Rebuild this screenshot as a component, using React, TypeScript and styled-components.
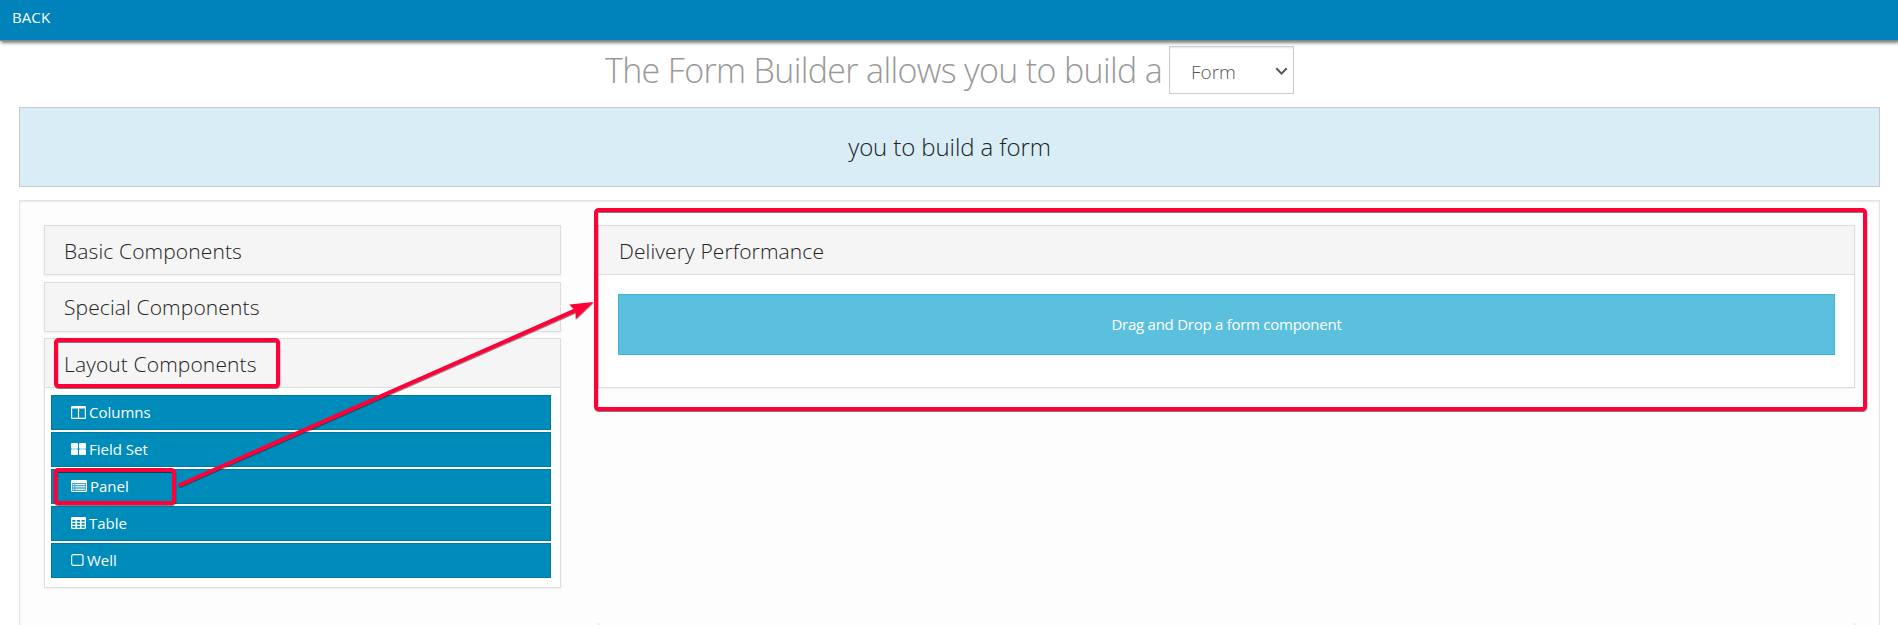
import React from "react";
import styled, { createGlobalStyle, css } from "styled-components";

const GlobalStyle = createGlobalStyle`
  *, *::before, *::after { box-sizing: border-box; }
  html, body { height: 625px; overflow: hidden; }
  body {
    margin: 0;
    background: #fff;
    color: #333;
    font-family: "Open Sans", "Noto Sans", sans-serif;
    font-size: 15px;
    line-height: 1.4;
  }
`;

const NavBar = styled.nav`
  height: 41px;
  padding: 7px 12px 0;
  background: #0083bb;
  border-bottom: 1px solid #8c8680;
  box-shadow: 1px 2px 3px rgba(0, 0, 0, 0.5);
  color: #fff;
  font-size: 15px;
  letter-spacing: 0.1px;
  line-height: 20px;
`;

const Page = styled.main`
  height: 584px;
  padding: 5px 18px 0 19px;
  overflow: hidden;
`;

const Heading = styled.h1`
  display: flex;
  justify-content: center;
  align-items: flex-start;
  height: 61px;
  margin: 0;
  color: #999;
  font-size: 34px;
  font-weight: 300;
  line-height: 48px;
  white-space: pre;
`;

const HeadingText = styled.span`
  width: 565px;
  margin-right: -1px;
  letter-spacing: -0.66px;
`;

const TypeSelect = styled.div`
  display: flex;
  align-items: center;
  justify-content: space-between;
  width: 125px;
  height: 48px;
  padding: 3px 5px 0 21px;
  border: 1px solid #ccc;
  box-shadow: inset 0 1px 2px rgba(0, 0, 0, 0.1);
  color: #555;
  font-size: 19px;
`;

const Banner = styled.section`
  display: flex;
  align-items: center;
  justify-content: center;
  height: 80px;
  background: #d9edf7;
  border: 1px solid #c8c8ca;
  color: #222;
  font-size: 24px;
  font-weight: 300;
  letter-spacing: -0.1px;
`;

const Well = styled.section`
  display: flex;
  align-items: flex-start;
  height: 425px;
  margin-top: 13px;
  padding: 24px 24px 0;
  gap: 37px;
  background: #fdfdfd;
  border: 1px solid #e3e3e3;
  border-bottom: 0;
  box-shadow: inset 0 1px 2px rgba(0, 0, 0, 0.07);
`;

const Sidebar = styled.aside`
  display: flex;
  flex-direction: column;
  width: 517px;
  gap: 7px;
`;

const Panel = styled.section<{ $raised?: boolean }>`
  background: #fff;
  border: 1px solid #ddd;
  box-shadow: 0 1px 2px rgba(0, 0, 0, 0.06);
  ${(p) => p.$raised && css`margin-top: -1px;`}
`;

const PanelTitle = styled.h3<{ $divided?: boolean; $line?: number; $indent?: number }>`
  height: ${(p) => (p.$divided ? 49 : 48)}px;
  margin: 0;
  padding: 0 ${(p) => p.$indent ?? 19}px;
  background: #f5f5f5;
  border-bottom: ${(p) => (p.$divided ? "1px solid #ddd" : "0")};
  color: #222;
  font-size: 21px;
  font-weight: 300;
  letter-spacing: 0.12px;
  line-height: ${(p) => p.$line ?? 50}px;
`;

const ComponentList = styled.div`
  display: flex;
  flex-direction: column;
  gap: 2px;
  height: 199px;
  padding: 7px 9px 0 6px;
`;

const ComponentButton = styled.button`
  display: flex;
  align-items: center;
  flex: 0 0 35px;
  padding: 0 19px 1px;
  gap: 3px;
  background: #008cba;
  border: 1px solid #0079a1;
  color: #fff;
  font: 400 15px "Open Sans", "Noto Sans", sans-serif;
`;

const Canvas = styled.div`
  display: flex;
  flex-direction: column;
  width: 1257px;
  gap: 235px;
`;

const CanvasBody = styled.div`
  height: 112px;
  padding: 19px 19px 0;
`;

const NextPanel = styled.div`
  height: 2px;
  border: 1px solid #ddd;
  border-width: 0 1px;
`;

const DropZone = styled.div`
  display: flex;
  align-items: center;
  justify-content: center;
  height: 61px;
  background: #5bc0de;
  border: 1px solid #3db5d8;
  color: #fff;
  font-size: 15px;
  letter-spacing: -0.26px;
`;

const Annotations = styled.svg`
  position: absolute;
  inset: 0 auto auto 0;
  pointer-events: none;
`;

type IconName = "columns" | "fieldset" | "panel" | "table" | "well";

const glyphs: Record<IconName, { width: number; shape: React.ReactNode }> = {
  columns: {
    width: 15,
    shape: (
      <path fillRule="evenodd" d="M1.3 0H13.7Q15 0 15 1.3V11.7Q15 13 13.7 13H1.3Q0 13 0 11.7V1.3Q0 0 1.3 0ZM1.2 2.4V11.8H6.9V2.4ZM8.1 2.4V11.8H13.8V2.4Z" />
    ),
  },
  fieldset: {
    width: 15,
    shape: (
      <>
        <rect width="7" height="5.7" rx="1" />
        <rect x="8" width="7" height="5.7" rx="1" />
        <rect y="6.3" width="7" height="5.7" rx="1" />
        <rect x="8" y="6.3" width="7" height="5.7" rx="1" />
      </>
    ),
  },
  panel: {
    width: 16,
    shape: (
      <>
        <path fillRule="evenodd" d="M1.3 0H14.7Q16 0 16 1.3V10.7Q16 12 14.7 12H1.3Q0 12 0 10.7V1.3Q0 0 1.3 0ZM1.1 3V10.9H14.9V3Z" />
        <path d="M2 4H3.3V5H2ZM4.3 4H14V5H4.3ZM2 6.3H3.3V7.3H2ZM4.3 6.3H14V7.3H4.3ZM2 8.7H3.3V9.7H2ZM4.3 8.7H14V9.7H4.3Z" />
        <path opacity=".25" d="M1 3H15V11H1Z" />
      </>
    ),
  },
  table: {
    width: 15,
    shape: (
      <path fillRule="evenodd" d="M1.3 0H13.7Q15 0 15 1.3V10.7Q15 12 13.7 12H1.3Q0 12 0 10.7V1.3Q0 0 1.3 0ZM1.3 3V4.7H4.4V3ZM5.9 3V4.7H9.1V3ZM10.6 3V4.7H13.7V3ZM1.3 6V7.7H4.4V6ZM5.9 6V7.7H9.1V6ZM10.6 6V7.7H13.7V6ZM1.3 9V10.7H4.4V9ZM5.9 9V10.7H9.1V9ZM10.6 9V10.7H13.7V9Z" />
    ),
  },
  well: {
    width: 13,
    shape: <rect x=".6" y=".6" width="11.4" height="10.8" rx="2" fill="none" stroke="currentColor" strokeWidth="1.2" />,
  },
};

const Glyph = styled.svg`
  margin-top: 1px;
`;

function Icon({ name }: { name: IconName }) {
  const { width, shape } = glyphs[name];
  return (
    <Glyph width={width} height="13" viewBox={`0 0 ${width} 13`} fill="currentColor">
      {shape}
    </Glyph>
  );
}

const layoutComponents: { icon: IconName; label: string }[] = [
  { icon: "columns", label: "Columns" },
  { icon: "fieldset", label: "Field Set" },
  { icon: "panel", label: "Panel" },
  { icon: "table", label: "Table" },
  { icon: "well", label: "Well" },
];

function Callouts() {
  return (
    <Annotations width="1898" height="625" viewBox="0 0 1898 625">
      <defs>
        <filter id="mark-shadow" x="-5%" y="-10%" width="110%" height="120%">
          <feDropShadow dx="0.3" dy="1" stdDeviation="0.3" floodColor="#000" floodOpacity="0.5" />
        </filter>
      </defs>
      <g fill="none" stroke="#ff0037" strokeWidth="4" filter="url(#mark-shadow)">
        <rect x="56" y="340" width="222" height="46" rx="2.5" />
        <rect x="55.5" y="470" width="118.5" height="33" rx="2.5" />
        <rect x="596" y="210" width="1269" height="199" rx="2.5" />
        <path d="M178.5 485.5L577 309.7" />
        <path d="M593.5 302L569.5 304.5L575.5 310.5L575.8 319Z" fill="#ff0037" stroke="none" />
      </g>
    </Annotations>
  );
}

export default function App() {
  return (
    <>
      <GlobalStyle />
      <NavBar>BACK</NavBar>
      <Page>
        <Heading>
          <HeadingText>The Form Builder allows you to build a</HeadingText>
          <TypeSelect>
            Form
            <svg width="13" height="9" viewBox="0 0 13 9" fill="none" stroke="#555" strokeWidth="2">
              <path d="M1.3 1.2L6.5 6.6L11.7 1.2" />
            </svg>
          </TypeSelect>
        </Heading>
        <Banner>you to build a form</Banner>
        <Well>
          <Sidebar>
            <Panel>
              <PanelTitle>Basic Components</PanelTitle>
            </Panel>
            <Panel>
              <PanelTitle $line={48}>Special Components</PanelTitle>
            </Panel>
            <Panel $raised>
              <PanelTitle $divided>Layout Components</PanelTitle>
              <ComponentList>
                {layoutComponents.map(({ icon, label }) => (
                  <ComponentButton key={label}>
                    <Icon name={icon} />
                    {label}
                  </ComponentButton>
                ))}
              </ComponentList>
            </Panel>
          </Sidebar>
          <Canvas>
            <Panel>
              <PanelTitle $divided $indent={20}>Delivery Performance</PanelTitle>
              <CanvasBody>
                <DropZone>Drag and Drop a form component</DropZone>
              </CanvasBody>
            </Panel>
            <NextPanel />
          </Canvas>
        </Well>
      </Page>
      <Callouts />
    </>
  );
}
